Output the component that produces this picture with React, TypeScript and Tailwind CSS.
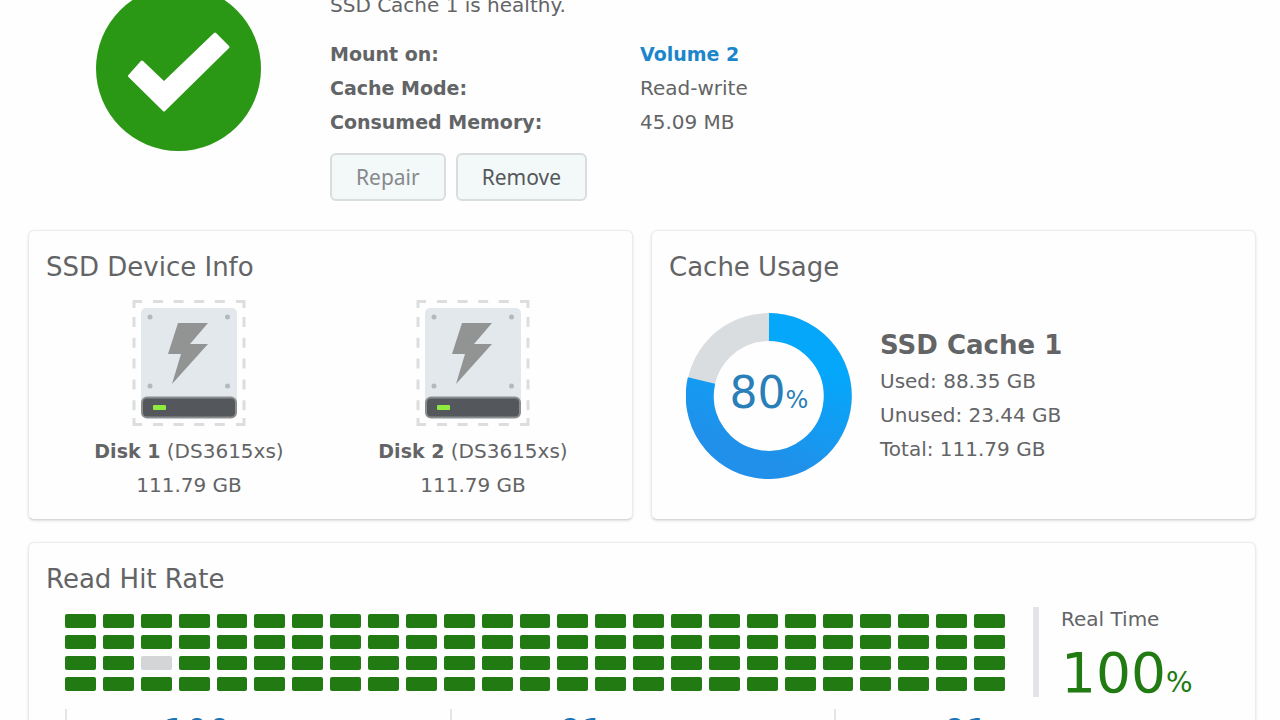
import React from 'react';

interface Disk {
  name: string;
  model: string;
  size: string;
}

interface Stat {
  id: string;
  value: string;
}

const disks: Disk[] = [
  { name: 'Disk 1', model: 'DS3615xs', size: '111.79 GB' },
  { name: 'Disk 2', model: 'DS3615xs', size: '111.79 GB' },
];

const stats: Stat[] = [
  { id: 'day', value: '100' },
  { id: 'week', value: '91' },
  { id: 'month', value: '91' },
];

const COLUMNS = 25;
const ROWS = 4;
const EMPTY_CELL = 52;
const cells = Array.from({ length: COLUMNS * ROWS }, (_, i) => i !== EMPTY_CELL);

function HealthyIcon() {
  return (
    <svg width="166" height="166" viewBox="0 0 166 166" aria-label="Healthy" role="img">
      <circle cx="82.500" cy="82.500" r="82.500" fill="#2a9815" />
      <path
        d="M46 76 L68 97 L119 48 L132 61 L68 124 L33.500 90 Z"
        fill="#fff"
        stroke="#fff"
        strokeWidth="3"
        strokeLinejoin="round"
      />
    </svg>
  );
}

function DiskIcon() {
  return (
    <svg width="114" height="128" viewBox="0 0 114 128" aria-hidden="true">
      <g fill="none" stroke="#dcddde" strokeWidth="3">
        <path d="M2 9 V2.500 H10 M104 2.500 H112 V9 M112 119 V125.500 H104 M10 125.500 H2 V119" />
        <path d="M21 2.500 H93 M21 125.500 H93" strokeDasharray="10 10.600" />
        <path d="M2 18 V112 M112 18 V112" strokeDasharray="10 10.800" />
      </g>
      <rect x="9" y="9" width="96" height="104" rx="5" fill="#e2e8ec" />
      <g fill="#b5b9bc">
        <circle cx="18" cy="18" r="2.500" />
        <circle cx="95.500" cy="18" r="2.500" />
        <circle cx="18" cy="87" r="2.500" />
        <circle cx="95.500" cy="87" r="2.500" />
      </g>
      <path d="M46 24 H76 L58 45 H76 L40 85 L49 55 H36 Z" fill="#929493" />
      <rect x="10" y="98.500" width="94" height="20" rx="5" fill="#54585c" stroke="#8b8e8f" strokeWidth="2" />
      <rect x="21" y="106" width="13" height="5" rx="1" fill="#8fec3f" />
    </svg>
  );
}

function UsageRing() {
  return (
    <svg width="166" height="166" viewBox="0 0 166 166" className="col-start-1 row-start-1" aria-hidden="true">
      <defs>
        <linearGradient id="usage" x1="0.700" y1="0" x2="0.300" y2="1">
          <stop offset="0.200" stopColor="#05a7fb" />
          <stop offset="0.900" stopColor="#2090ea" />
        </linearGradient>
      </defs>
      <circle cx="83" cy="83" r="69" fill="none" stroke="#d9dddf" strokeWidth="28" />
      <path d="M83 14 A69 69 0 1 1 15.500 67.500" fill="none" stroke="url(#usage)" strokeWidth="28" />
    </svg>
  );
}

function Card({ title, className = '', children }: { title: string; className?: string; children: React.ReactNode }) {
  return (
    <section className={`rounded-md border border-[#ebebeb] border-b-[#d8d8d8] bg-[#fefefe] shadow-sm ${className}`}>
      <h2 className="px-[17px] pt-4 text-[26px] leading-10">{title}</h2>
      {children}
    </section>
  );
}

export default function App() {
  return (
    <div className="h-screen overflow-hidden bg-[#fefefe] font-['DejaVu_Sans',sans-serif] text-[20px] leading-[34px] text-[#636466]">
      <header className="-mt-3.5 flex items-start pl-24">
        <HealthyIcon />
        <div className="pl-[68px]">
          <p className="pt-0.5 pb-[15px]">SSD Cache 1 is healthy.</p>
          <dl className="grid grid-cols-[310px_auto]">
            <dt className="text-[19px] font-bold">Mount on:</dt>
            <dd>
              <a href="#volume" className="block text-[19px] font-bold text-[#1c86cc]">Volume 2</a>
            </dd>
            <dt className="text-[19px] font-bold">Cache Mode:</dt>
            <dd>Read-write</dd>
            <dt className="text-[19px] font-bold">Consumed Memory:</dt>
            <dd>45.09 MB</dd>
          </dl>
          <div className="flex gap-2.5 pt-3.5 font-['Noto_Sans',sans-serif] text-[21px]">
            <button type="button" disabled className="h-12 rounded-md border-2 border-[#d8dddd] bg-[#f3f8f9] px-6 text-[#87898b]">
              Repair
            </button>
            <button type="button" className="h-12 rounded-md border-2 border-[#d8dddd] bg-[#f3f8f9] px-6 text-[#55585b]">
              Remove
            </button>
          </div>
        </div>
      </header>

      <main className="pl-7 pr-6 pt-[29px]">
        <div className="grid grid-cols-2 gap-[18px]">
          <Card title="SSD Device Info" className="h-[290px]">
            <div className="flex gap-14 pl-[46px] pt-3">
              {disks.map((disk) => (
                <div key={disk.name} className="flex w-[228px] flex-col items-center">
                  <DiskIcon />
                  <p className="pt-[7px]">
                    <strong className="text-[19px]">{disk.name}</strong> ({disk.model})
                  </p>
                  <p>{disk.size}</p>
                </div>
              ))}
            </div>
          </Card>

          <Card title="Cache Usage" className="h-[290px]">
            <div className="flex items-center gap-7 pl-[34px] pt-[26px]">
              <div className="grid place-items-center">
                <UsageRing />
                <p className="col-start-1 row-start-1 text-[44px] text-[#2a7fb8]">
                  80<span className="text-[24px]">%</span>
                </p>
              </div>
              <div>
                <h3 className="text-[26px] font-bold leading-[38px]">SSD Cache 1</h3>
                <p>Used: 88.35 GB</p>
                <p>Unused: 23.44 GB</p>
                <p>Total: 111.79 GB</p>
              </div>
            </div>
          </Card>
        </div>

        <Card title="Read Hit Rate" className="mt-[22px]">
          <div className="flex items-start px-9 pt-2">
            <div className="grid flex-1 grid-cols-25 gap-[7px] pt-[7px]">
              {cells.map((hit, i) => (
                <span key={i} className={hit ? 'h-3.5 rounded-xs bg-[#217a12]' : 'h-3.5 rounded-xs bg-[#d3d5d7]'} />
              ))}
            </div>
            <div className="ml-7 flex w-[186px] gap-[22px]">
              <div className="h-[90px] w-1.5 bg-[#e2e4e8]" />
              <div className="h-[90px]">
                <p className="leading-6">Real Time</p>
                <p className="text-[55px] leading-[84px] text-[#217a12]">
                  100<span className="text-[28px]">%</span>
                </p>
              </div>
            </div>
          </div>
          <div className="grid grid-cols-3 px-9 pt-3">
            {stats.map((stat) => (
              <div key={stat.id} className="border-l-2 border-[#e3e5e7] text-[35px] leading-[46px] text-[#1c74b5]">
                <p className="w-[260px] text-center">{stat.value}</p>
              </div>
            ))}
          </div>
        </Card>
      </main>
    </div>
  );
}
